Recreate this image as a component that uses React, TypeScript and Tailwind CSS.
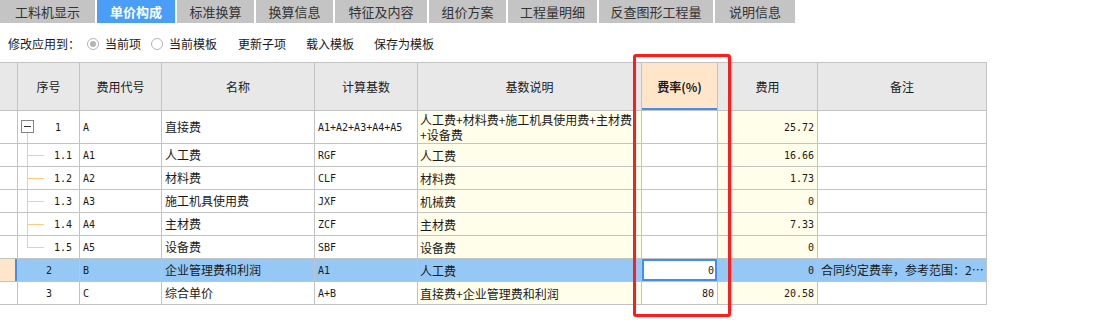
import type { ReactNode } from 'react'

const tabs = [
  { label: '工料机显示', w: 'w-[95px]' },
  { label: '单价构成', w: 'w-[78px]', active: true },
  { label: '标准换算', w: 'w-[77px]' },
  { label: '换算信息', w: 'w-[77px]' },
  { label: '特征及内容', w: 'w-[92px]' },
  { label: '组价方案', w: 'w-[77px]' },
  { label: '工程量明细', w: 'w-[89px]' },
  { label: '反查图形工程量', w: 'w-[114px]' },
  { label: '说明信息', w: 'w-[80px]' },
]

type Row = {
  no: string
  level: 0 | 1 | 2
  tree?: 'top' | 'mid' | 'last'
  code: string
  name: string
  base: string
  desc: string
  rate: string
  fee: string
  note: string
  selected?: boolean
}

const rows: Row[] = [
  { no: '1', level: 0, code: 'A', name: '直接费', base: 'A1+A2+A3+A4+A5', desc: '人工费+材料费+施工机具使用费+主材费+设备费', rate: '', fee: '25.72', note: '' },
  { no: '1.1', level: 1, tree: 'mid', code: 'A1', name: '人工费', base: 'RGF', desc: '人工费', rate: '', fee: '16.66', note: '' },
  { no: '1.2', level: 1, tree: 'mid', code: 'A2', name: '材料费', base: 'CLF', desc: '材料费', rate: '', fee: '1.73', note: '' },
  { no: '1.3', level: 1, tree: 'mid', code: 'A3', name: '施工机具使用费', base: 'JXF', desc: '机械费', rate: '', fee: '0', note: '' },
  { no: '1.4', level: 1, tree: 'mid', code: 'A4', name: '主材费', base: 'ZCF', desc: '主材费', rate: '', fee: '7.33', note: '' },
  { no: '1.5', level: 1, tree: 'last', code: 'A5', name: '设备费', base: 'SBF', desc: '设备费', rate: '', fee: '0', note: '' },
  { no: '2', level: 2, code: 'B', name: '企业管理费和利润', base: 'A1', desc: '人工费', rate: '0', fee: '0', note: '合同约定费率，参考范围：2…', selected: true },
  { no: '3', level: 2, code: 'C', name: '综合单价', base: 'A+B', desc: '直接费+企业管理费和利润', rate: '80', fee: '20.58', note: '' },
]

const cjk = "font-['Noto_Sans_CJK_SC',sans-serif]"
const mono = "font-['DejaVu_Sans_Mono',monospace] text-[10px]"

function Cell({ children, className = '' }: { children?: ReactNode; className?: string }) {
  return (
    <div className={`border-r border-b border-[#c3c3c3] flex items-center overflow-hidden whitespace-nowrap ${className}`}>
      {children}
    </div>
  )
}

function Radio({ checked }: { checked?: boolean }) {
  return (
    <span className="w-[12px] h-[12px] rounded-full border border-[#b4b4b4] bg-white flex items-center justify-center">
      {checked && <span className="w-[6px] h-[6px] rounded-full bg-[#b4b4b4]" />}
    </span>
  )
}

function NoCell({ row }: { row: Row }) {
  const bg = row.selected ? 'bg-[#95c8f5]' : 'bg-white'
  if (row.level === 0) {
    return (
      <Cell className={`${bg} relative`}>
        <span className="absolute left-[3px] top-[9px] w-[13px] h-[13px] border border-[#858585] bg-white flex items-center justify-center">
          <span className="w-[7px] h-px bg-[#333]" />
        </span>
        <span className="absolute left-[9px] top-[22px] bottom-0 w-px bg-[#ffcb80]" />
        <span className={`${mono} pl-[37px] text-[#1a1a1a]`}>{row.no}</span>
      </Cell>
    )
  }
  if (row.level === 1) {
    return (
      <Cell className={`${bg} relative`}>
        <span
          className={`absolute left-[9px] top-0 w-px bg-[#ffcb80] ${row.tree === 'last' ? 'h-[12px]' : 'h-full'}`}
        />
        <span className="absolute left-[9px] top-[11px] w-[17px] h-px bg-[#ffcb80]" />
        <span className={`${mono} pl-[36px] text-[#1a1a1a]`}>{row.no}</span>
      </Cell>
    )
  }
  return (
    <Cell className={bg}>
      <span className={`${mono} pl-[28px] text-[#1a1a1a]`}>{row.no}</span>
    </Cell>
  )
}

export default function App() {
  return (
    <div className={`relative w-[1106px] h-[323px] bg-white text-[#1a1a1a] ${cjk} text-[12px]`}>
      <div className="flex gap-[2px] h-[23px]">
        {tabs.map((t) => (
          <div
            key={t.label}
            className={`${t.w} flex items-center justify-center text-[13px] ${
              t.active ? 'bg-[#4a9ef7] text-white font-bold' : 'bg-[#c4c4c4] text-[#333]'
            }`}
          >
            {t.label}
          </div>
        ))}
      </div>

      <div className="h-[39px] pt-[3px] flex items-center pl-[8px] text-[12px]">
        <span>修改应用到：</span>
        <span className="ml-[7px] flex items-center gap-[6px]">
          <Radio checked />
          <span>当前项</span>
        </span>
        <span className="ml-[10px] flex items-center gap-[6px]">
          <Radio />
          <span>当前模板</span>
        </span>
        <span className="ml-[21px]">更新子项</span>
        <span className="ml-[20px]">载入模板</span>
        <span className="ml-[20px]">保存为模板</span>
      </div>

      <div className="w-[987px] grid grid-cols-[18px_62px_82px_153px_103px_224px_76px_100px_169px] border-t border-[#c3c3c3]">
        <Cell className="h-[48px] bg-[#e8e8e8]" />
        <Cell className="h-[48px] bg-[#e8e8e8] justify-center">序号</Cell>
        <Cell className="h-[48px] bg-[#e8e8e8] justify-center">费用代号</Cell>
        <Cell className="h-[48px] bg-[#e8e8e8] justify-center">名称</Cell>
        <Cell className="h-[48px] bg-[#e8e8e8] justify-center">计算基数</Cell>
        <Cell className="h-[48px] bg-[#e8e8e8] justify-center">基数说明</Cell>
        <Cell className="h-[48px] bg-[#ffe6cb] justify-center font-bold relative">
          费率(%)
          <span className="absolute left-0 right-0 bottom-0 h-[2px] bg-[#3f8ff0]" />
        </Cell>
        <Cell className="h-[48px] bg-[#e8e8e8] justify-center">费用</Cell>
        <Cell className="h-[48px] bg-[#e8e8e8] justify-center">备注</Cell>

        {rows.map((r) => {
          const h = r.level === 0 ? 'h-[33px]' : 'h-[23px]'
          const white = r.selected ? 'bg-[#95c8f5]' : 'bg-white'
          const yellow = r.selected ? 'bg-[#95c8f5]' : 'bg-[#fffeea]'
          return (
            <div key={r.no} className="contents">
              <Cell className={`${h} ${r.selected ? 'bg-[#ffe6cb]' : 'bg-white'} relative`}>
                {r.selected && <span className="absolute right-0 top-0 bottom-0 w-[2px] bg-[#3f8ff0]" />}
              </Cell>
              <NoCell row={r} />
              <Cell className={`${h} ${white} pl-[3px] ${mono}`}>{r.code}</Cell>
              <Cell className={`${h} ${white} pl-[3px]`}>{r.name}</Cell>
              <Cell className={`${h} ${white} pl-[3px] ${mono}`}>{r.base}</Cell>
              <Cell className={`${h} ${yellow} pl-[2px] pr-[2px]`}>
                <span className="whitespace-normal leading-[15px]">{r.desc}</span>
              </Cell>
              <Cell className={`${h} bg-white justify-end relative`}>
                {r.selected && <span className="absolute inset-0 border-2 border-[#3f8ff0]" />}
                <span className={`${mono} pr-[3px]`}>{r.rate}</span>
              </Cell>
              <Cell className={`${h} ${yellow} justify-end`}>
                <span className={`${mono} pr-[3px]`}>{r.fee}</span>
              </Cell>
              <Cell className={`${h} ${white} pl-[3px]`}>
                <span className="overflow-hidden text-ellipsis">{r.note}</span>
              </Cell>
            </div>
          )
        })}
      </div>

      <div className="absolute left-[633px] top-[54px] w-[98px] h-[263px] border-[3px] border-[#ff1c1c] rounded-[3px]" />
    </div>
  )
}
